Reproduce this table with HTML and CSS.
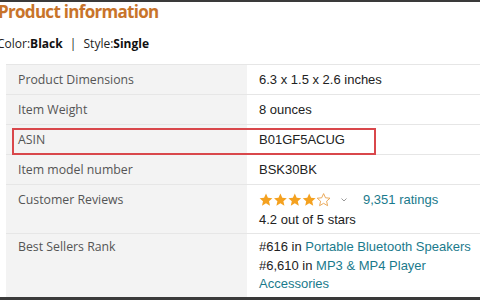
FILE: index.html
```html
<!DOCTYPE html>
<html>
<head>
<meta charset="utf-8">
<link rel="stylesheet" href="styles.css">
</head>
<body>
<div class="page">
  <div class="topbar"></div>
  <h1 class="title">Product information</h1>
  <div class="variant">Color:<b>Black</b> <span class="sep">|</span> Style:<b>Single</b></div>
  <div class="table">
    <div class="row">
      <div class="label">Product Dimensions</div>
      <div class="value">6.3 x 1.5 x 2.6 inches</div>
    </div>
    <div class="row">
      <div class="label">Item Weight</div>
      <div class="value">8 ounces</div>
    </div>
    <div class="row highlight">
      <div class="label">ASIN</div>
      <div class="value">B01GF5ACUG</div>
      <div class="redbox"></div>
    </div>
    <div class="row">
      <div class="label">Item model number</div>
      <div class="value">BSK30BK</div>
    </div>
    <div class="row reviews">
      <div class="label">Customer Reviews</div>
      <div class="value">
        <div class="rating">
          <svg class="stars" width="72" height="14" viewBox="0 0 72 14">
            <defs>
              <path id="st" d="M7 0.6 L8.9 4.8 L13.4 5.2 L10 8.2 L11 12.7 L7 10.3 L3 12.7 L4 8.2 L0.6 5.2 L5.1 4.8 Z"/>
            </defs>
            <use href="#st" x="0" fill="#f4a11f"/>
            <use href="#st" x="14.4" fill="#f4a11f"/>
            <use href="#st" x="28.8" fill="#f4a11f"/>
            <use href="#st" x="43.2" fill="#f4a11f"/>
            <use href="#st" x="57.6" fill="#fff" stroke="#e8a04a" stroke-width="0.9"/>
            <clipPath id="part"><rect x="57.6" y="0" width="3.2" height="14"/></clipPath>
            <use href="#st" x="57.6" fill="#f4a11f" clip-path="url(#part)"/>
          </svg>
          <svg class="chev" width="8" height="6" viewBox="0 0 8 6"><path d="M1.5 1.5 L4 4 L6.5 1.5" fill="none" stroke="#999" stroke-width="1"/></svg>
          <span class="link">9,351 ratings</span>
        </div>
        <div class="outof">4.2 out of 5 stars</div>
      </div>
    </div>
    <div class="row last">
      <div class="label">Best Sellers Rank</div>
      <div class="value">
        <div>#616 in <span class="link">Portable Bluetooth Speakers</span></div>
        <div>#6,610 in <span class="link">MP3 &amp; MP4 Player<br>Accessories</span></div>
      </div>
    </div>
  </div>
  <div class="bottombar"></div>
</div>
</body>
</html>
```
FILE: styles.css
```css
* { box-sizing: border-box; }
html, body { margin: 0; padding: 0; background: #fff; }
.page {
  width: 480px;
  height: 300px;
  overflow: hidden;
  display: flex;
  flex-direction: column;
}
.topbar { height: 2px; background: #3a3a3a; flex: none; }
.title {
  margin: 0 0 0 -2px;
  font-family: "Open Sans", "DejaVu Sans", sans-serif;
  font-weight: 700;
  font-size: 17px;
  letter-spacing: -0.7px;
  line-height: 20px;
  color: #c8742a;
  height: 20px;
}
.variant {
  margin: 14px 0 0 -3px;
  font-family: "Open Sans", sans-serif;
  font-size: 12px;
  line-height: 16px;
  color: #222;
  height: 16px;
}
.variant b { font-weight: 700; color: #111; }
.variant .sep { margin: 0 4px; }
.table {
  margin: 12px 0 0 6px;
  border-top: 1px solid #e6e6e6;
  flex: 1;
  display: flex;
  flex-direction: column;
}
.row {
  position: relative;
  display: grid;
  grid-template-columns: 241px 1fr;
  border-bottom: 1px solid #e6e6e6;
  height: 30px;
}
.row.reviews { height: 49px; }
.row.last { border-bottom: none; flex: 1; }
.label {
  background: #f3f3f3;
  padding: 6px 0 0 12px;
  font-family: "Open Sans", sans-serif;
  font-size: 12.3px;
  line-height: 18px;
  color: #555;
}
.value {
  padding: 6px 0 0 12px;
  font-family: "Liberation Sans", Arial, sans-serif;
  font-size: 13px;
  line-height: 18.5px;
  color: #222;
}
.row.last .label, .row.last .value { padding-top: 4px; }
.outof { margin-top: 2px; }
.link { color: #1a7a8c; }
.rating { display: flex; align-items: center; height: 18px; }
.stars { margin-right: 9px; }
.chev { margin-right: 15px; }
.redbox {
  position: absolute;
  left: 6px;
  top: 3px;
  width: 364px;
  height: 27px;
  border: 2px solid #d9474b;
}
.bottombar { height: 3px; background: #3a3a3a; flex: none; }
```
